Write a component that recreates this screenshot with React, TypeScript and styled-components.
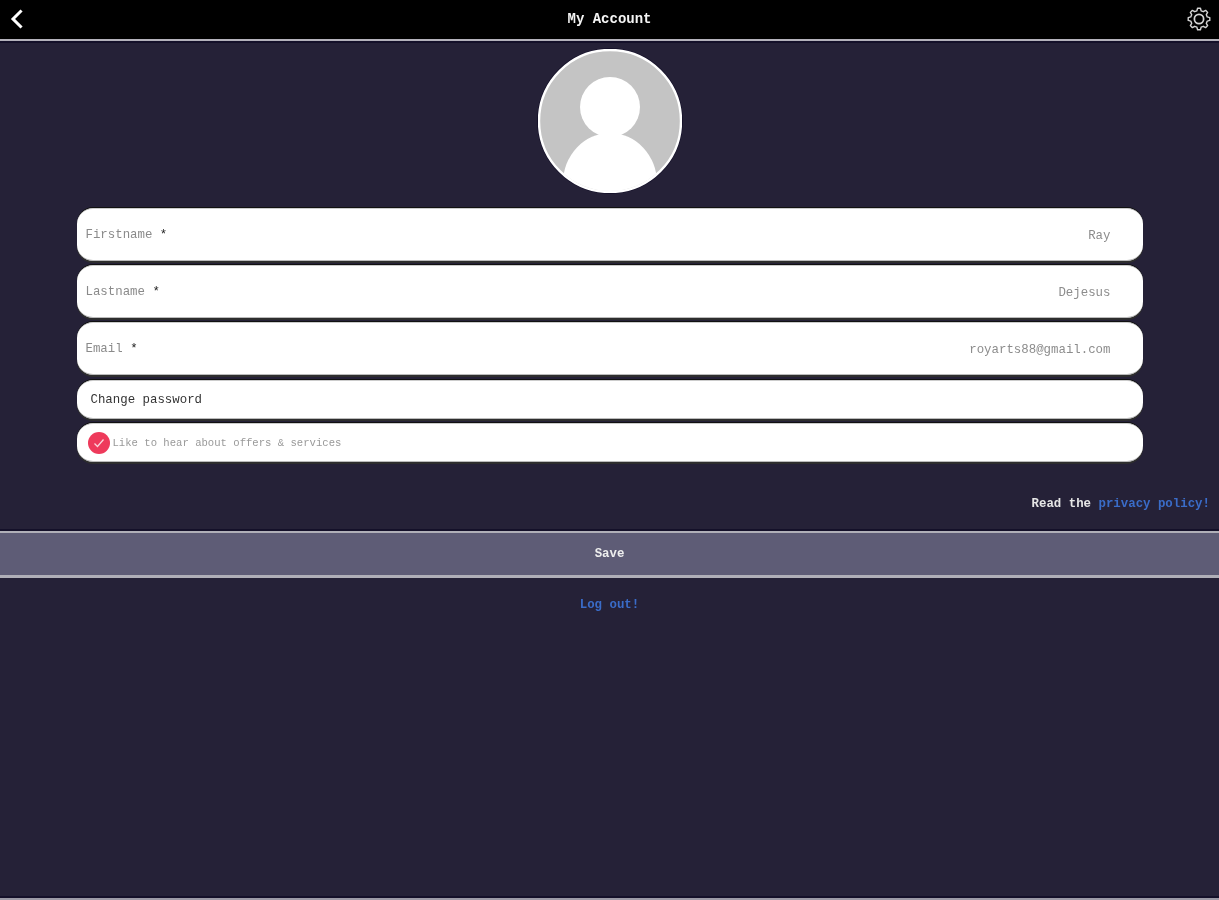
import React from "react";
import styled, { createGlobalStyle } from "styled-components";

const Global = createGlobalStyle`
  html, body { margin: 0; padding: 0; background: #252137; }
  body { font-family: "Liberation Mono", "DejaVu Sans Mono", monospace; }
`;

const Page = styled.div`
  width: 1219px;
  height: 900px;
  overflow: hidden;
  display: flex;
  flex-direction: column;
  align-items: center;
  background: #252137;
  filter: blur(0.55px);
`;

const Header = styled.header`
  width: 100%;
  height: 41px;
  flex: none;
  box-sizing: border-box;
  background: #000;
  border-bottom: 2px solid #b4b2bb;
  box-shadow: 0 2px 0 #141029;
  display: flex;
  align-items: center;
  justify-content: space-between;
  padding: 0 8px;
`;

const IconSlot = styled.div`
  width: 24px;
  height: 24px;
  display: flex;
  align-items: center;
  justify-content: center;
  position: relative;
  top: -1px;
`;

const Title = styled.h1`
  margin: 0;
  font-size: 14px;
  font-weight: 700;
  line-height: 1;
  color: #f4f4f4;
  position: relative;
  top: -1px;
`;

const AvatarFrame = styled.div`
  width: 144px;
  height: 144px;
  margin-top: 8px;
  flex: none;
  border-radius: 50%;
  box-shadow: 0 0 0 1px #15112a;
`;

const Form = styled.form`
  width: 1066px;
  margin-top: 15px;
  display: flex;
  flex-direction: column;
`;

const Pill = styled.div<{ $h: number; $gap: number }>`
  box-sizing: border-box;
  height: ${(p) => p.$h}px;
  margin-bottom: ${(p) => p.$gap}px;
  background: #fff;
  border-radius: 16px;
  box-shadow: 0 2px 0 #2e2e2e, 0 -1px 0 #111;
  border-bottom: 1px solid #bbb;
  border-top: 1px solid #ccc;
  display: flex;
  align-items: center;
`;

const FieldRow = styled(Pill)`
  justify-content: space-between;
  padding: 0 32px 0 9px;
`;

const Label = styled.span`
  font-size: 12.4px;
  color: #8a8a8a;
  & b { color: #222; font-weight: 400; }
`;

const Value = styled.span`
  font-size: 12.4px;
  color: #8c8c8c;
  position: relative;
  top: 1px;
`;

const ChangeRow = styled(Pill)`
  padding-left: 14px;
  font-size: 12.4px;
  color: #333;
`;

const CheckRow = styled(Pill)`
  padding-left: 11px;
  gap: 3px;
`;

const CheckDot = styled.span`
  width: 22px;
  height: 22px;
  flex: none;
  border-radius: 50%;
  background: #ee3a5b;
  display: flex;
  align-items: center;
  justify-content: center;
`;

const CheckText = styled.span`
  font-size: 10.6px;
  color: #999;
`;

const PrivacyLine = styled.p`
  align-self: flex-end;
  margin: 35px 9px 0 0;
  font-size: 12.4px;
  line-height: 15px;
  font-weight: 700;
  color: #e6e6e6;
`;

const LinkText = styled.a`
  color: #3a6cc8;
  font-weight: 700;
`;

const SaveBar = styled.button`
  width: 100%;
  height: 47px;
  margin-top: 19px;
  flex: none;
  padding: 0;
  border: 0;
  border-top: 2px solid #b0afb8;
  border-bottom: 3px solid #b0afb8;
  box-shadow: 0 -2px 0 #141029;
  background: #5e5c76;
  color: #eee;
  font-family: inherit;
  font-size: 12.4px;
  font-weight: 700;
`;

const LogoutLine = styled.div`
  margin-top: 20px;
  font-size: 12.4px;
  line-height: 15px;
`;

const BottomEdge = styled.div`
  width: 100%;
  height: 2px;
  margin-top: auto;
  flex: none;
  background: #9c9aa6;
  box-shadow: 0 -2px 0 #141029;
`;

function gearPath(teeth: number, outer: number, root: number, c: number): string {
  const pts: string[] = [];
  const step = (Math.PI * 2) / teeth;
  for (let i = 0; i < teeth; i++) {
    const a = i * step - Math.PI / 2;
    const corners: [number, number][] = [
      [root, a - step * 0.32],
      [outer, a - step * 0.17],
      [outer, a + step * 0.17],
      [root, a + step * 0.32],
    ];
    corners.forEach(([r, t]) => {
      pts.push(`${(c + r * Math.cos(t)).toFixed(2)} ${(c + r * Math.sin(t)).toFixed(2)}`);
    });
  }
  return `M${pts.join(" L")} Z`;
}

export default function App() {
  return (
    <Page>
      <Global />
      <Header>
        <IconSlot>
          <svg width="24" height="24" viewBox="0 0 24 24" fill="none" stroke="#fff" strokeWidth="3" strokeLinecap="square">
            <path d="M12.5 4.5 L5 12 L12.5 19.5" />
          </svg>
        </IconSlot>
        <Title>My Account</Title>
        <IconSlot>
          <svg width="26" height="26" viewBox="0 0 26 26" fill="none" stroke="#d4d4d4" strokeWidth="1.5" strokeLinejoin="round">
            <path d={gearPath(8, 11.8, 9.2, 13)} />
            <circle cx="13" cy="13" r="5" strokeWidth="1.9" />
          </svg>
        </IconSlot>
      </Header>

      <AvatarFrame>
        <svg width="144" height="144" viewBox="0 0 144 144">
          <defs>
            <clipPath id="avatarClip">
              <circle cx="72" cy="72" r="70" />
            </clipPath>
          </defs>
          <circle cx="72" cy="72" r="71" fill="#c4c4c4" stroke="#fff" strokeWidth="2.4" />
          <g clipPath="url(#avatarClip)" fill="#fff">
            <circle cx="72" cy="58" r="30" />
            <ellipse cx="72" cy="134" rx="47" ry="50" />
          </g>
        </svg>
      </AvatarFrame>

      <Form>
        <FieldRow $h={53} $gap={4}>
          <Label>Firstname <b>*</b></Label>
          <Value>Ray</Value>
        </FieldRow>
        <FieldRow $h={53} $gap={4}>
          <Label>Lastname <b>*</b></Label>
          <Value>Dejesus</Value>
        </FieldRow>
        <FieldRow $h={53} $gap={5}>
          <Label>Email <b>*</b></Label>
          <Value>royarts88@gmail.com</Value>
        </FieldRow>
        <ChangeRow $h={39} $gap={4}>Change password</ChangeRow>
        <CheckRow $h={39} $gap={0}>
          <CheckDot>
            <svg width="14" height="14" viewBox="0 0 14 14" fill="none" stroke="#f9d5db" strokeWidth="1.3">
              <path d="M2.5 7.5 L5.5 10.5 L11.5 3.5" />
            </svg>
          </CheckDot>
          <CheckText>Like to hear about offers &amp; services</CheckText>
        </CheckRow>
      </Form>

      <PrivacyLine>
        Read the <LinkText>privacy policy!</LinkText>
      </PrivacyLine>

      <SaveBar type="button">Save</SaveBar>

      <LogoutLine>
        <LinkText>Log out!</LinkText>
      </LogoutLine>

      <BottomEdge />
    </Page>
  );
}
